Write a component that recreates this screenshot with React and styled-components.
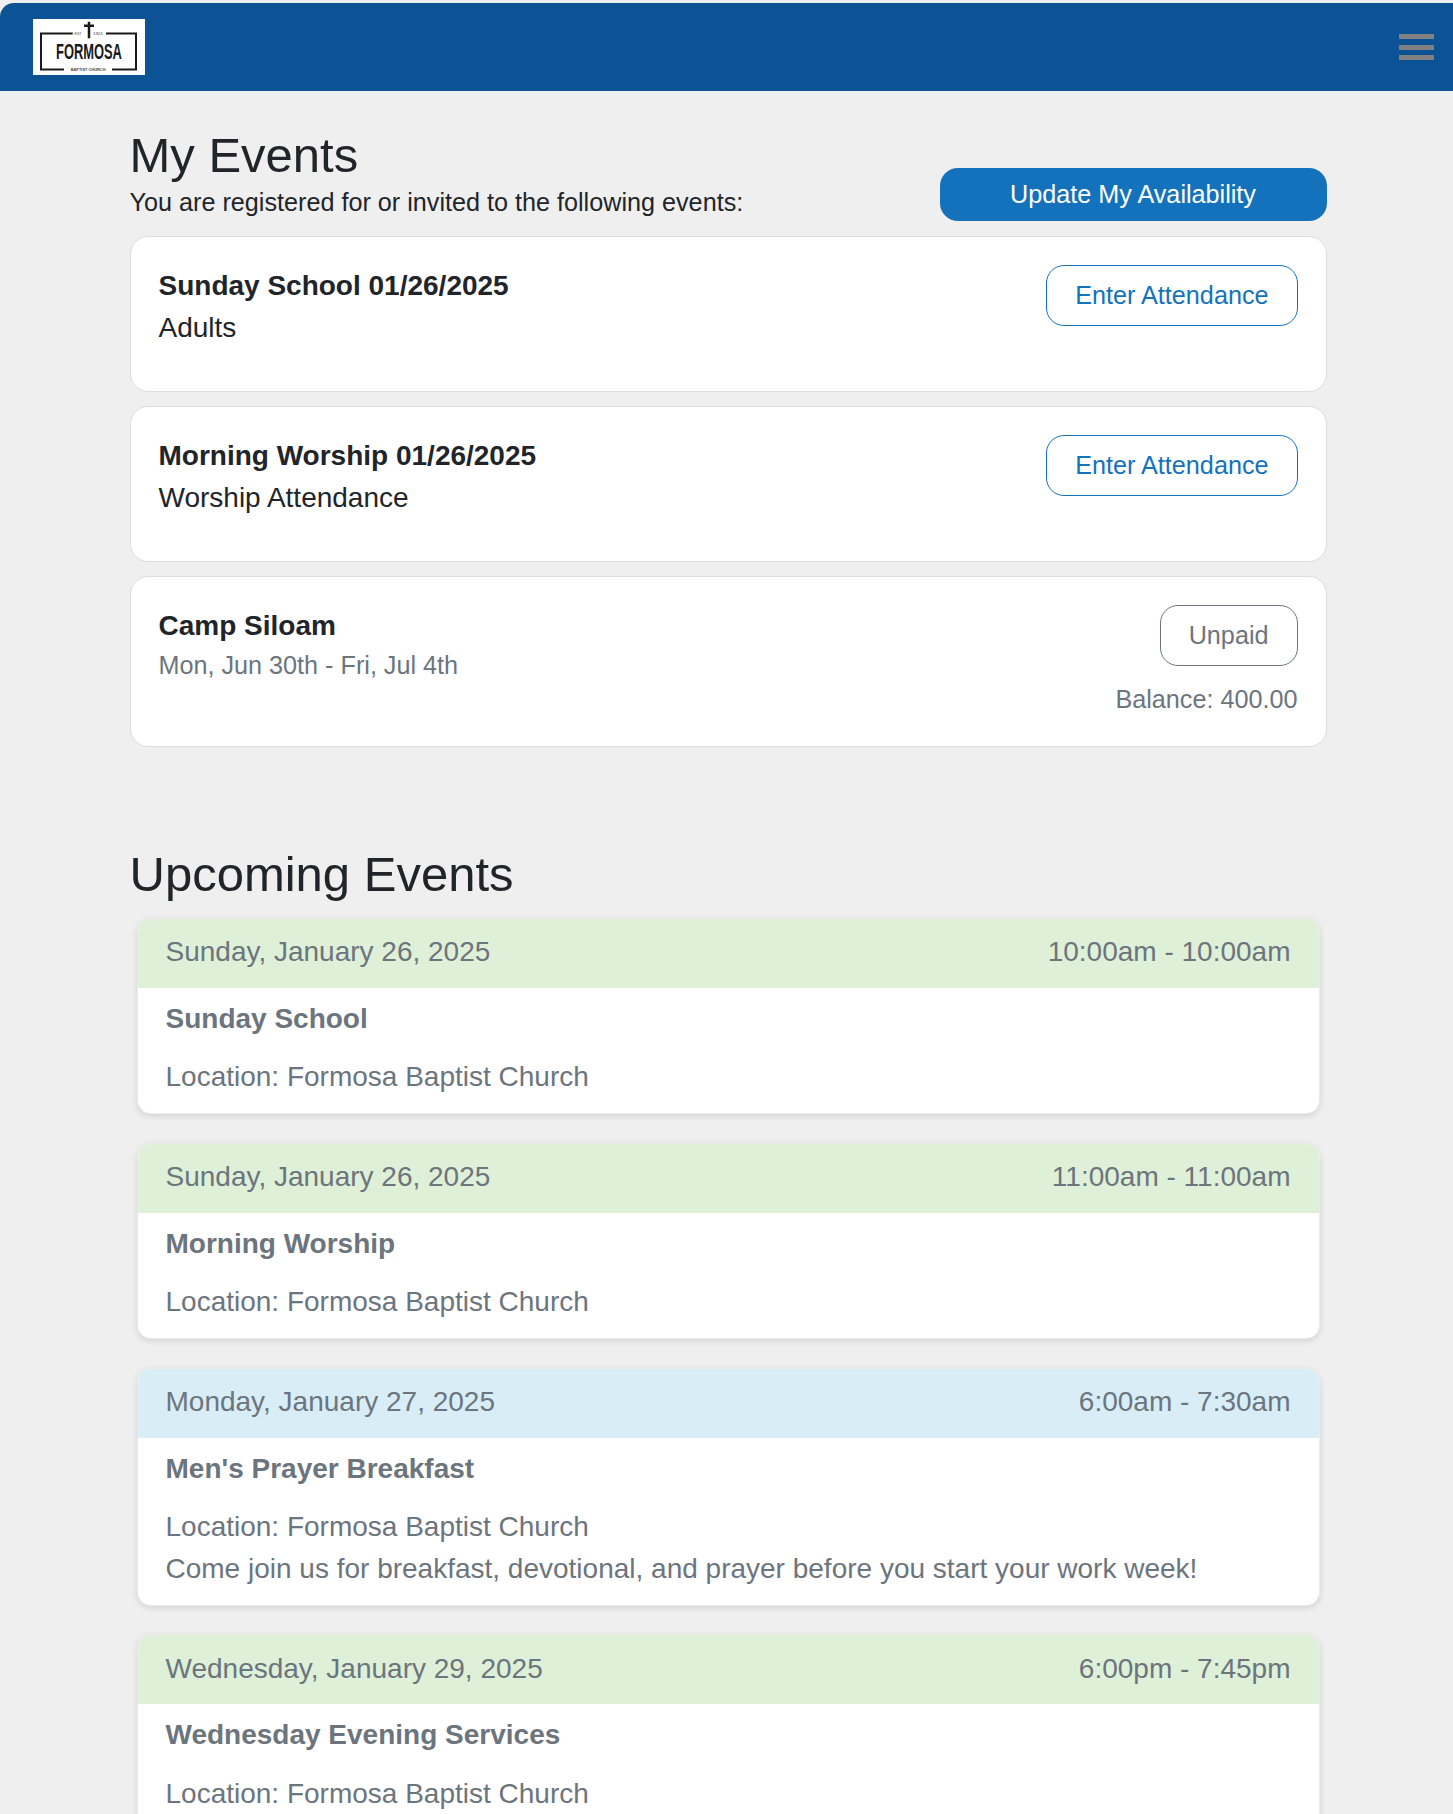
import React from 'react';
import styled, { createGlobalStyle } from 'styled-components';

const GlobalStyle = createGlobalStyle`
  html, body {
    margin: 0;
    height: 100%;
    overflow: hidden;
    background: #efefef;
  }
  body {
    font-family: "Liberation Sans", Arial, sans-serif;
    color: #212529;
  }
  * {
    box-sizing: border-box;
  }
`;

const Page = styled.div`
  height: 1814px;
  overflow: hidden;
  padding-top: 3px;
`;

const Navbar = styled.header`
  height: 88px;
  background: #0b5394;
  border-top-left-radius: 14px;
  display: flex;
  align-items: center;
  justify-content: space-between;
  padding: 0 19px 0 33px;
`;

const LogoBox = styled.div`
  width: 112px;
  height: 56px;
  background: #fff;

  svg {
    display: block;
  }
`;

const Burger = styled.div`
  width: 35px;
  display: flex;
  flex-direction: column;
  gap: 5.5px;

  span {
    height: 5px;
    background: #808080;
  }
`;

const Content = styled.main`
  width: 1197px;
  margin-left: 129.5px;
  padding-top: 36px;
`;

const PageTitle = styled.h2`
  margin: 0;
  font-size: 49px;
  font-weight: 400;
  line-height: 56px;
  color: #212529;
`;

const IntroRow = styled.div`
  display: flex;
  justify-content: space-between;
  align-items: flex-end;
  margin-top: -15px;
`;

const Intro = styled.p`
  margin: 0 0 1px;
  font-size: 25.2px;
  line-height: 36px;
`;

const PrimaryButton = styled.a`
  width: 387px;
  height: 53px;
  display: flex;
  align-items: center;
  justify-content: center;
  background: #1472bd;
  color: #fff;
  border-radius: 18px;
  font-size: 25.2px;
`;

const MyEventList = styled.div`
  display: flex;
  flex-direction: column;
  gap: 14.4px;
  margin-top: 15px;
`;

const MyEventCard = styled.section`
  height: ${({ $tall }) => ($tall ? '170.8px' : '155.6px')};
  background: #fff;
  border: 1px solid #dcdcdc;
  border-radius: 18px;
  padding: 28px;
  display: flex;
  justify-content: space-between;
  align-items: flex-start;
`;

const EventName = styled.div`
  font-size: 28px;
  font-weight: 700;
  line-height: 42px;
  color: #212529;
`;

const EventSub = styled.div`
  font-size: ${({ $muted }) => ($muted ? '25.2px' : '28px')};
  line-height: ${({ $muted }) => ($muted ? '36px' : '42px')};
  color: ${({ $muted }) => ($muted ? '#6c757d' : '#212529')};
`;

const Actions = styled.div`
  display: flex;
  flex-direction: column;
  align-items: flex-end;
`;

const OutlineButton = styled.a`
  height: 61px;
  padding: 0 28px;
  display: flex;
  align-items: center;
  border: 1px solid ${({ $muted }) => ($muted ? '#6c757d' : '#1472bd')};
  border-radius: 18px;
  color: ${({ $muted }) => ($muted ? '#6c757d' : '#1472bd')};
  font-size: 25.2px;
`;

const Balance = styled.div`
  margin-top: 12px;
  font-size: 25.2px;
  line-height: 42px;
  color: #6c757d;
`;

const SectionTitle = styled(PageTitle)`
  margin-top: 98px;
  line-height: 58px;
`;

const UpcomingList = styled.div`
  display: flex;
  flex-direction: column;
  gap: 28.8px;
  margin: 15px 7px 0;
`;

const UpcomingCard = styled.article`
  background: #fff;
  border: 1px solid rgba(0, 0, 0, 0.08);
  border-radius: 14px;
  overflow: hidden;
  box-shadow: 0 2px 6px rgba(0, 0, 0, 0.12);
  color: #6c757d;
`;

const UpcomingHead = styled.div`
  height: 69px;
  padding: 0 28px 2px;
  display: flex;
  align-items: center;
  justify-content: space-between;
  background: ${({ $tone }) => ($tone === 'info' ? '#d9edf7' : '#dff0d8')};
  font-size: 28px;
`;

const UpcomingBody = styled.div`
  padding: 10px 28px 15px;
  font-size: 28px;
  line-height: 41.6px;
`;

const UpcomingName = styled.div`
  font-weight: 700;
  margin-bottom: 17px;
`;

const Logo = () => (
  <svg width="112" height="56" viewBox="0 0 112 56" fontFamily="Liberation Sans, sans-serif">
    <path d="M39.7 14.5H8V50.5H31M79 50.5H103V14.5H73" fill="none" stroke="#1a1a1a" strokeWidth="2" />
    <path d="M51 6.7H61M56 2.7V19.3" stroke="#1a1a1a" strokeWidth="2.5" fill="none" />
    <text transform="translate(41.5 16) scale(0.9 1)" fontSize="4" fill="#444">EST</text>
    <text transform="translate(60 16) scale(1.1 1)" fontSize="4" fill="#444">1924</text>
    <text transform="translate(23 40) scale(0.587 1)" fontSize="22" fontWeight="700" fill="#1a1a1a">FORMOSA</text>
    <text transform="translate(37.7 51.8) scale(0.98 1)" fontSize="4" fontWeight="700" fill="#444">BAPTIST CHURCH</text>
  </svg>
);

const upcoming = [
  { date: 'Sunday, January 26, 2025', time: '10:00am - 10:00am', name: 'Sunday School', tone: 'success' },
  { date: 'Sunday, January 26, 2025', time: '11:00am - 11:00am', name: 'Morning Worship', tone: 'success' },
  {
    date: 'Monday, January 27, 2025',
    time: '6:00am - 7:30am',
    name: "Men's Prayer Breakfast",
    tone: 'info',
    note: 'Come join us for breakfast, devotional, and prayer before you start your work week!',
  },
  { date: 'Wednesday, January 29, 2025', time: '6:00pm - 7:45pm', name: 'Wednesday Evening Services', tone: 'success' },
];

const App = () => (
  <Page>
    <GlobalStyle />
    <Navbar>
      <LogoBox>
        <Logo />
      </LogoBox>
      <Burger>
        <span />
        <span />
        <span />
      </Burger>
    </Navbar>
    <Content>
      <PageTitle>My Events</PageTitle>
      <IntroRow>
        <Intro>You are registered for or invited to the following events:</Intro>
        <PrimaryButton>Update My Availability</PrimaryButton>
      </IntroRow>
      <MyEventList>
        <MyEventCard>
          <div>
            <EventName>Sunday School 01/26/2025</EventName>
            <EventSub>Adults</EventSub>
          </div>
          <OutlineButton>Enter Attendance</OutlineButton>
        </MyEventCard>
        <MyEventCard>
          <div>
            <EventName>Morning Worship 01/26/2025</EventName>
            <EventSub>Worship Attendance</EventSub>
          </div>
          <OutlineButton>Enter Attendance</OutlineButton>
        </MyEventCard>
        <MyEventCard $tall>
          <div>
            <EventName>Camp Siloam</EventName>
            <EventSub $muted>Mon, Jun 30th - Fri, Jul 4th</EventSub>
          </div>
          <Actions>
            <OutlineButton $muted>Unpaid</OutlineButton>
            <Balance>Balance: 400.00</Balance>
          </Actions>
        </MyEventCard>
      </MyEventList>
      <SectionTitle>Upcoming Events</SectionTitle>
      <UpcomingList>
        {upcoming.map((item) => (
          <UpcomingCard key={item.name}>
            <UpcomingHead $tone={item.tone}>
              <span>{item.date}</span>
              <span>{item.time}</span>
            </UpcomingHead>
            <UpcomingBody>
              <UpcomingName>{item.name}</UpcomingName>
              <div>Location: Formosa Baptist Church</div>
              {item.note && <div>{item.note}</div>}
            </UpcomingBody>
          </UpcomingCard>
        ))}
      </UpcomingList>
    </Content>
  </Page>
);

export default App;
